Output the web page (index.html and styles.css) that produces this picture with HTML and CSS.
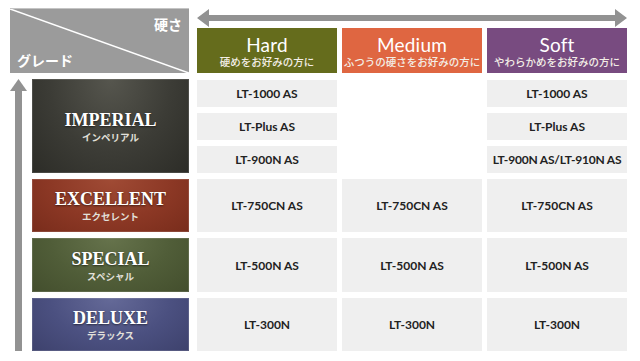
FILE: index.html
```html
<!DOCTYPE html>
<html lang="ja">
<head>
<meta charset="utf-8">
<title>グレード表</title>
<link rel="stylesheet" href="styles.css">
</head>
<body>
<div class="chart">
  <div class="corner">
    <svg class="diag" viewBox="0 0 100 100" preserveAspectRatio="none"><line x1="0" y1="0" x2="100" y2="100"/></svg>
    <span class="corner-top">硬さ</span>
    <span class="corner-bottom">グレード</span>
  </div>
  <div class="harrow">
    <svg width="430" height="18" viewBox="0 0 430 18"><polygon points="0,9 12,0 12,6 418,6 418,0 430,9 418,18 418,12 12,12 12,18"/></svg>
  </div>
  <div class="head hard c3"><span class="en">Hard</span><span class="jp">硬めをお好みの方に</span></div>
  <div class="head medium c4"><span class="en">Medium</span><span class="jp">ふつうの硬さをお好みの方に</span></div>
  <div class="head soft c5"><span class="en">Soft</span><span class="jp">やわらかめをお好みの方に</span></div>

  <div class="varrow">
    <svg class="vhead" width="17" height="12" viewBox="0 0 17 12"><polygon points="8.5,0 17,12 0,12"/></svg>
    <div class="vshaft"></div>
  </div>

  <div class="grade imperial r3"><span class="gen">IMPERIAL</span><span class="gjp">インペリアル</span></div>
  <div class="stack c3 r3">
    <div class="cell">LT-1000 AS</div>
    <div class="cell">LT-Plus AS</div>
    <div class="cell">LT-900N AS</div>
  </div>
  <div class="stack c5 r3">
    <div class="cell">LT-1000 AS</div>
    <div class="cell">LT-Plus AS</div>
    <div class="cell long">LT-900N AS/LT-910N AS</div>
  </div>

  <div class="grade excellent r4"><span class="gen">EXCELLENT</span><span class="gjp">エクセレント</span></div>
  <div class="cell c3 r4">LT-750CN AS</div>
  <div class="cell c4 r4">LT-750CN AS</div>
  <div class="cell c5 r4">LT-750CN AS</div>

  <div class="grade special r5"><span class="gen">SPECIAL</span><span class="gjp">スペシャル</span></div>
  <div class="cell c3 r5">LT-500N AS</div>
  <div class="cell c4 r5">LT-500N AS</div>
  <div class="cell c5 r5">LT-500N AS</div>

  <div class="grade deluxe r6"><span class="gen">DELUXE</span><span class="gjp">デラックス</span></div>
  <div class="cell c3 r6">LT-300N</div>
  <div class="cell c4 r6">LT-300N</div>
  <div class="cell c5 r6">LT-300N</div>
</div>
</body>
</html>
```

FILE: styles.css
```css
* { box-sizing: border-box; margin: 0; padding: 0; }
html, body { background: #fff; }
body {
  font-family: "Lato", "Noto Sans CJK JP", sans-serif;
  color: #222;
}
.chart {
  display: grid;
  grid-template-columns: 17px 160px 140px 140px 140px;
  grid-template-rows: 14px 45px 94px 53px 54px 53px;
  column-gap: 5px;
  row-gap: 6px;
  padding: 8px 0 0 10px;
}
.c3 { grid-column: 3; }
.c4 { grid-column: 4; }
.c5 { grid-column: 5; }
.r3 { grid-row: 3; }
.r4 { grid-row: 4; }
.r5 { grid-row: 5; }
.r6 { grid-row: 6; }

/* corner */
.corner {
  grid-column: 1 / 3;
  grid-row: 1 / 3;
  margin-right: 3px;
  background: #9b9b9b;
  border-top: 1px solid #c4c4c4;
  position: relative;
  display: flex;
  flex-direction: column;
  justify-content: space-between;
  padding: 7px 7px 5px 7px;
  color: #fff;
  font-family: "Noto Sans CJK JP", sans-serif;
  font-weight: 700;
  font-size: 14px;
  line-height: 16px;
}
.diag {
  position: absolute;
  inset: 0;
  width: 100%;
  height: 100%;
}
.diag line {
  stroke: #fff;
  stroke-width: 1.6;
  vector-effect: non-scaling-stroke;
}
.corner-top { align-self: flex-end; position: relative; }
.corner-bottom { align-self: flex-start; position: relative; }

/* horizontal arrow */
.harrow {
  grid-column: 3 / 6;
  grid-row: 1;
  align-self: start;
  height: 18px;
  margin-top: 1px;
}
.harrow svg { display: block; fill: #929292; }

/* headers */
.head {
  grid-row: 2;
  display: flex;
  flex-direction: column;
  align-items: center;
  justify-content: center;
  color: #fff;
  padding-top: 1px;
}
.head .en {
  font-family: "Lato", sans-serif;
  font-size: 19px;
  line-height: 20px;
  letter-spacing: 0.2px;
}
.head .jp {
  font-family: "Noto Sans CJK JP", sans-serif;
  font-weight: 500;
  font-size: 10.5px;
  line-height: 13px;
  color: #f3eee6;
}
.hard { background: #656c1c; }
.medium { background: #df6641; }
.soft { background: #784b80; }

/* vertical arrow */
.varrow {
  grid-column: 1;
  grid-row: 3 / 7;
  display: flex;
  flex-direction: column;
  align-items: center;
}
.vhead { display: block; fill: #929292; flex: none; }
.vshaft { width: 7px; flex: 1; background: #929292; }

/* grade labels */
.grade {
  grid-column: 2;
  margin-right: 3px;
  display: flex;
  flex-direction: column;
  align-items: center;
  justify-content: center;
  color: #fff;
  box-shadow: inset 0 0 0 1px rgba(255,255,255,0.12);
}
.gen {
  font-family: "Liberation Serif", serif;
  font-weight: 700;
  font-size: 18px;
  line-height: 20px;
  text-shadow: 0 1px 2px rgba(0,0,0,0.55);
}
.gjp {
  font-family: "Noto Sans CJK JP", sans-serif;
  font-weight: 700;
  font-size: 9.5px;
  line-height: 12px;
  color: #e2e0da;
  margin-top: 1px;
}
.imperial { background: radial-gradient(ellipse at 50% 0%, #56564e 0%, #3c3c36 55%, #2c2c27 100%); }
.excellent { background: radial-gradient(ellipse at 50% 0%, #a04b35 0%, #8c3825 55%, #782c1b 100%); }
.special { background: radial-gradient(ellipse at 50% 0%, #66734c 0%, #505d38 55%, #434e2d 100%); }
.deluxe { background: radial-gradient(ellipse at 50% 0%, #656a98 0%, #4b5080 55%, #3d416c 100%); }

/* cells */
.stack {
  display: flex;
  flex-direction: column;
  gap: 6px;
  padding-top: 1px;
}
.stack .cell { flex: 1; }
.cell {
  background: #efefef;
  display: flex;
  align-items: center;
  justify-content: center;
  font-family: "Lato", sans-serif;
  font-weight: 700;
  font-size: 12px;
  color: #222;
  white-space: nowrap;
}
.cell.long { letter-spacing: -0.2px; }
```
